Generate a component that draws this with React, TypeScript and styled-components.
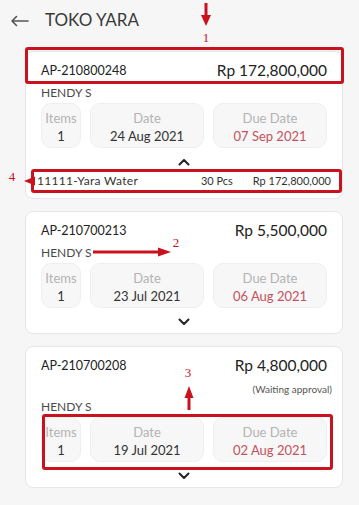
import React from "react";
import styled, { createGlobalStyle } from "styled-components";

const GlobalStyle = createGlobalStyle`
  html, body { margin: 0; padding: 0; background: #f6f6f6; }
  body { font-family: Lato, "Open Sans", sans-serif; color: #333; }
  * { box-sizing: border-box; }
`;

const Page = styled.div`
  position: relative;
  width: 359px;
  min-height: 505px;
  background: #f6f6f6;
`;

const Header = styled.header`
  height: 39px;
  display: flex;
  align-items: center;
  padding-left: 10px;
`;

const BackButton = styled.button`
  border: 0;
  background: transparent;
  padding: 0;
  width: 19px;
  height: 14px;
  display: flex;
  align-items: center;
  margin-top: 3px;
  color: #555;
`;

const Title = styled.h1`
  margin: 0 0 0 16px;
  font-size: 17px;
  font-weight: 400;
  color: #3a3a3a;
`;

const List = styled.div`
  display: flex;
  flex-direction: column;
  gap: 12px;
  padding: 12px 16px 17px 25px;
`;

const Card = styled.div`
  background: #fff;
  border: 1px solid #e6e6e6;
  border-radius: 8px;
  padding: 7px 15px 5px;
  display: flex;
  flex-direction: column;
`;

const TopRow = styled.div`
  height: 22px;
  display: flex;
  align-items: center;
  justify-content: space-between;
`;

const DocNo = styled.span`
  font-size: 12.5px;
  color: #222;
`;

const Amount = styled.span`
  font-size: 15.5px;
  color: #222;
`;

const Status = styled.div`
  margin: 6px -5px 0 0;
  font-size: 10px;
  line-height: 14px;
  text-align: right;
  color: #555;
`;

const Customer = styled.div<{ $tight?: boolean }>`
  margin-top: ${(p) => (p.$tight ? "2px" : "3px")};
  font-size: 12px;
  line-height: 18px;
  color: #4a4a4a;
`;

const Stats = styled.div`
  margin-top: 1px;
  display: grid;
  grid-template-columns: 40px 1fr 1fr;
  gap: 9px;
`;

const StatBox = styled.div`
  height: 45px;
  background: #f7f7f7;
  border: 1px solid #efefef;
  border-radius: 10px;
  display: flex;
  flex-direction: column;
  align-items: center;
  padding-top: 5px;
`;

const StatLabel = styled.span`
  font-size: 13px;
  line-height: 18px;
  color: #b3b3b3;
`;

const StatValue = styled.span<{ $due?: boolean }>`
  font-size: 13px;
  line-height: 18px;
  color: ${(p) => (p.$due ? "#c4525c" : "#333")};
`;

const Toggle = styled.div`
  margin-top: 8px;
  height: 12px;
  display: flex;
  justify-content: center;
  align-items: center;
`;

const ItemRow = styled.div`
  margin: 4px -4px 5px;
  height: 16px;
  display: grid;
  grid-template-columns: 1fr auto auto;
  column-gap: 20px;
  align-items: center;
  font-size: 11px;
  color: #333;
`;

const ItemName = styled.span`
  font-size: 12px;
  letter-spacing: 0.3px;
`;

const Overlay = styled.svg`
  position: absolute;
  left: 0;
  top: 0;
  pointer-events: none;
`;

const Chevron = ({ up }: { up?: boolean }) => (
  <svg width="12" height="8" viewBox="0 0 12 8">
    <polyline
      points={up ? "1.5,6.5 6,2 10.5,6.5" : "1.5,1.5 6,6 10.5,1.5"}
      fill="none"
      stroke="#222"
      strokeWidth="2"
      strokeLinecap="round"
      strokeLinejoin="round"
    />
  </svg>
);

type Invoice = {
  no: string;
  amount: string;
  status?: string;
  customer: string;
  items: number;
  date: string;
  due: string;
  open?: boolean;
  lines?: { name: string; qty: string; total: string }[];
};

const invoices: Invoice[] = [
  {
    no: "AP-210800248",
    amount: "Rp 172,800,000",
    customer: "HENDY S",
    items: 1,
    date: "24 Aug 2021",
    due: "07 Sep 2021",
    open: true,
    lines: [{ name: "11111-Yara Water", qty: "30 Pcs", total: "Rp 172,800,000" }],
  },
  {
    no: "AP-210700213",
    amount: "Rp 5,500,000",
    customer: "HENDY S",
    items: 1,
    date: "23 Jul 2021",
    due: "06 Aug 2021",
  },
  {
    no: "AP-210700208",
    amount: "Rp 4,800,000",
    status: "(Waiting approval)",
    customer: "HENDY S",
    items: 1,
    date: "19 Jul 2021",
    due: "02 Aug 2021",
  },
];

const RED = "#c9121e";

export default function App() {
  return (
    <Page>
      <GlobalStyle />
      <Header>
        <BackButton aria-label="Back">
          <svg width="19" height="12" viewBox="0 0 19 12">
            <path
              d="M18 6H2M6.5 1.5L2 6l4.5 4.5"
              fill="none"
              stroke="#555"
              strokeWidth="1.6"
              strokeLinecap="round"
              strokeLinejoin="round"
            />
          </svg>
        </BackButton>
        <Title>TOKO YARA</Title>
      </Header>
      <List>
        {invoices.map((inv) => (
          <Card key={inv.no}>
            <TopRow>
              <DocNo>{inv.no}</DocNo>
              <Amount>{inv.amount}</Amount>
            </TopRow>
            {inv.status && <Status>{inv.status}</Status>}
            <Customer $tight={!!inv.status}>{inv.customer}</Customer>
            <Stats>
              <StatBox>
                <StatLabel>Items</StatLabel>
                <StatValue>{inv.items}</StatValue>
              </StatBox>
              <StatBox>
                <StatLabel>Date</StatLabel>
                <StatValue>{inv.date}</StatValue>
              </StatBox>
              <StatBox>
                <StatLabel>Due Date</StatLabel>
                <StatValue $due>{inv.due}</StatValue>
              </StatBox>
            </Stats>
            <Toggle>
              <Chevron up={inv.open} />
            </Toggle>
            {inv.open &&
              inv.lines?.map((l) => (
                <ItemRow key={l.name}>
                  <ItemName>{l.name}</ItemName>
                  <span>{l.qty}</span>
                  <span>{l.total}</span>
                </ItemRow>
              ))}
          </Card>
        ))}
      </List>
      <Overlay width="359" height="505" viewBox="0 0 359 505">
        <g fill="none" stroke={RED} strokeWidth="3">
          <rect x="26.5" y="48.5" width="316" height="34" rx="1.5" />
          <rect x="32.5" y="170.5" width="308" height="21" rx="1.5" />
          <rect x="43.5" y="415.5" width="288" height="53" rx="1.5" />
          <line x1="206" y1="3" x2="206" y2="17" />
          <line x1="93" y1="252" x2="160" y2="252" />
          <line x1="189" y1="410" x2="189" y2="396" />
        </g>
        <g fill={RED}>
          <polygon points="201,15 211,15 206,26" />
          <polygon points="158,247.5 158,256.5 171,252" />
          <polygon points="184.5,398 193.5,398 189,386" />
          <polygon points="24,181 35,176.5 35,185.5" />
        </g>
        <g fill={RED} fontFamily="'Liberation Serif', serif" fontSize="13" textAnchor="middle">
          <text x="206" y="42">1</text>
          <text x="176" y="247">2</text>
          <text x="188" y="377">3</text>
          <text x="12" y="181">4</text>
        </g>
      </Overlay>
    </Page>
  );
}
